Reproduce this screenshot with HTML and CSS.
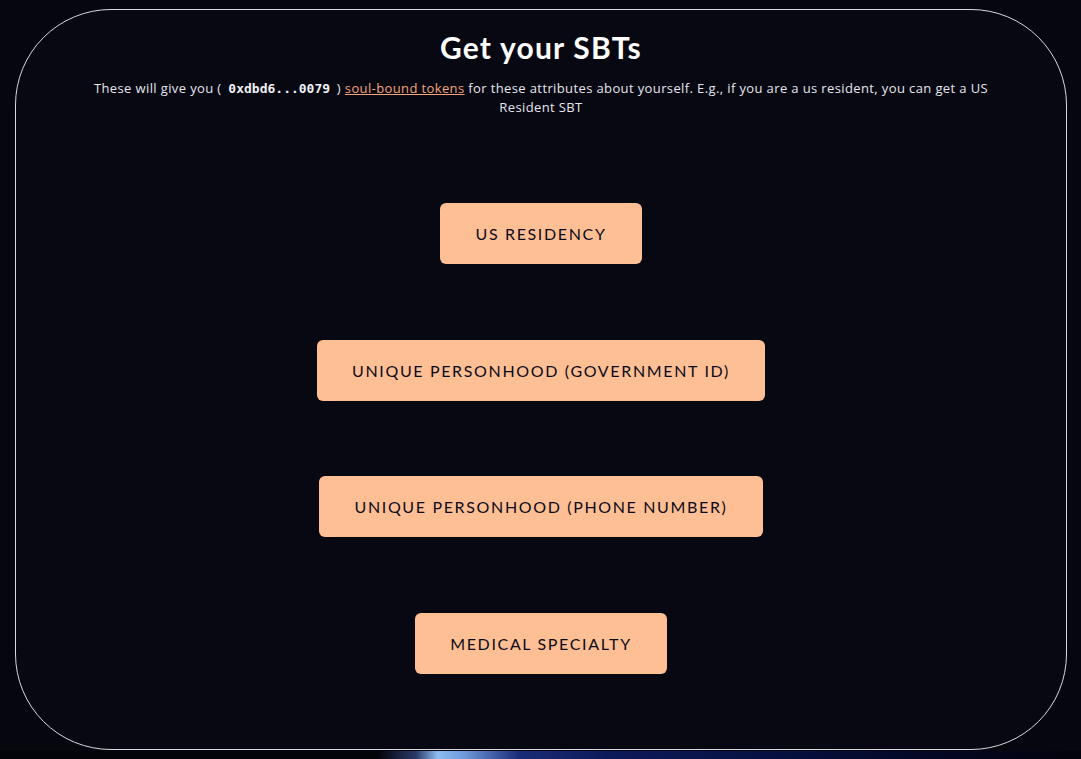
FILE: index.html
```html
<!DOCTYPE html>
<html lang="en">
<head>
<meta charset="utf-8">
<title>Get your SBTs</title>
<link rel="stylesheet" href="styles.css">
</head>
<body>
<main class="card">
  <h1 class="title">Get your SBTs</h1>
  <p class="intro">These will give you ( <code class="addr">0xdbd6...0079</code> ) <a class="link" href="#">soul-bound tokens</a> for these attributes about yourself. E.g., if you are a us resident, you can get a US Resident SBT</p>
  <div class="buttons">
    <button class="sbt-btn">US Residency</button>
    <button class="sbt-btn">Unique Personhood (Government ID)</button>
    <button class="sbt-btn">Unique Personhood (Phone Number)</button>
    <button class="sbt-btn">Medical Specialty</button>
  </div>
</main>
<div class="glow"></div>
</body>
</html>
```
FILE: styles.css
```css
html, body {
  margin: 0;
  padding: 0;
}
body {
  background: #06060f;
  font-family: "Open Sans", "Liberation Sans", sans-serif;
  overflow: hidden;
}
.card {
  box-sizing: border-box;
  margin: 9px 14px 0 15px;
  height: 741px;
  border: 1px solid #d8d8e0;
  border-radius: 96px;
  background: #080812;
  display: flex;
  flex-direction: column;
  align-items: center;
  padding: 18px 72px 0;
}
.title {
  margin: 0;
  color: #ffffff;
  font-family: "Lato", sans-serif;
  font-weight: 700;
  font-size: 30px;
  line-height: 38px;
  letter-spacing: 1.2px;
}
.intro {
  margin: 13px 0 0;
  color: #e6e6ee;
  font-size: 13px;
  line-height: 19px;
  letter-spacing: 0.38px;
  text-align: center;
}
.addr {
  font-family: "DejaVu Sans Mono", monospace;
  font-weight: 700;
  font-size: 13px;
  letter-spacing: 0;
  color: #f0f0f5;
  padding: 0 3px;
}
.link {
  color: #f2a57a;
  text-decoration: underline;
}
.buttons {
  margin-top: 86px;
  display: flex;
  flex-direction: column;
  align-items: center;
  gap: 75.5px;
}
.sbt-btn {
  height: 61px;
  padding: 0 35px;
  border: none;
  border-radius: 6px;
  background: #ffbf94;
  color: #0b0b18;
  font-family: "Lato", sans-serif;
  font-weight: 400;
  font-size: 16px;
  letter-spacing: 1.65px;
  text-transform: uppercase;
  cursor: pointer;
}
.glow {
  height: 30px;
  margin-top: 1px;
  background: linear-gradient(90deg, #03030a 0%, #03030a 35%, #2a3a6a 38.5%, #8cbcf2 40.5%, #6e98d8 43%, #1a2c78 48%, #0c1a5a 56%, #061040 72%, #030620 88%, #02030a 100%);
}
```
